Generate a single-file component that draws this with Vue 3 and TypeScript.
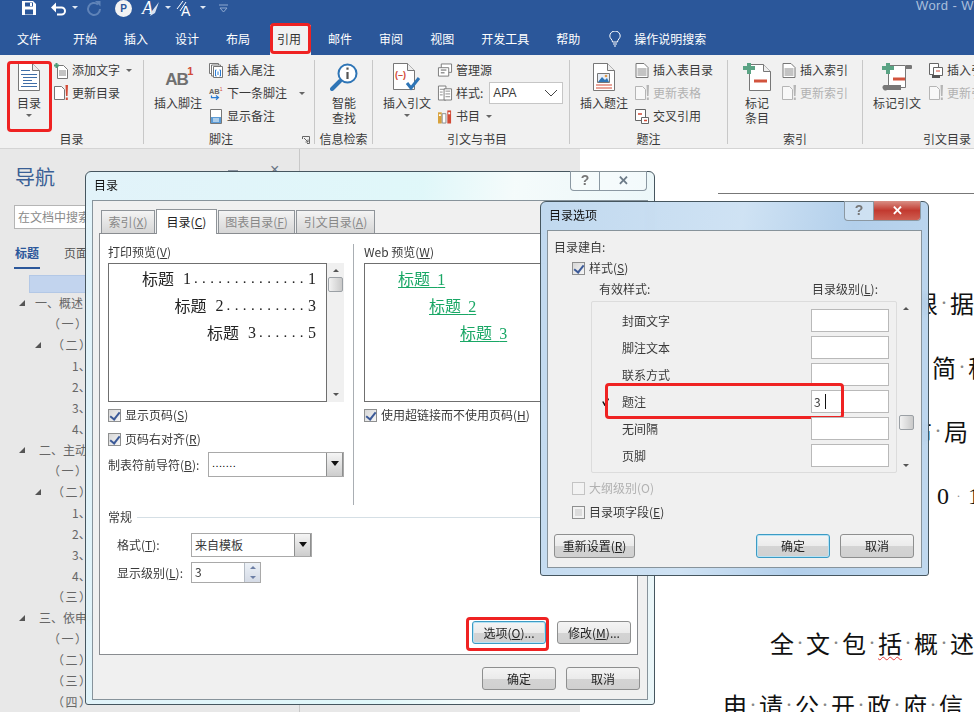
<script setup lang="ts">
interface TreeRow { t: string; x: number; a?: number }
const tabs = ['文件', '开始', '插入', '设计', '布局', '引用', '邮件', '审阅', '视图', '开发工具', '帮助']
const tree: TreeRow[] = [
  { t: '一、概述', x: 35, a: 19 }, { t: '（一）', x: 48 }, { t: '（二）', x: 52, a: 35 },
  { t: '1、', x: 72 }, { t: '2、', x: 72 }, { t: '3、', x: 72 }, { t: '4、', x: 72 },
  { t: '二、主动公开', x: 39, a: 19 }, { t: '（一）', x: 48 }, { t: '（二）', x: 52, a: 35 },
  { t: '1、', x: 72 }, { t: '2、', x: 72 }, { t: '3、', x: 72 }, { t: '4、', x: 72 },
  { t: '（三）', x: 52 }, { t: '三、依申请公开', x: 39, a: 19 }, { t: '（一）', x: 48 },
  { t: '（二）', x: 52 }, { t: '（三）', x: 52 }, { t: '（四）', x: 52 },
]
const styles = ['封面文字', '脚注文本', '联系方式', '题注', '无间隔', '页脚']
const docLines = [
  { c: 'l1', chars: ['根', '据'] }, { c: 'l2', chars: ['简', '称'] }, { c: 'l3', chars: ['布', '局'] },
  { c: 'l5', chars: ['全', '文', '包', '括', '概', '述'] }, { c: 'l6', chars: ['申', '请', '公', '开', '政', '府', '信'] },
]
</script>

<template>
  <div class="word">
    <header class="titlebar">
      <div class="qat">
        <svg class="q-save" width="14" height="14" viewBox="0 0 14 14"><path fill="#fff" d="M0 0h11l3 3v11H0z"/><path fill="#2b579a" d="M3 1.500h8v4H3zM3 8.500h8v5H3z"/><path fill="#fff" d="M8 2h2v3H8z"/></svg>
        <svg class="q-undo" width="17" height="14" viewBox="0 0 17 14"><path fill="none" stroke="#fff" stroke-width="2" d="M3 6.500h7.500a3.500 3.500 0 0 1 0 7H6"/><path fill="#fff" d="M0 6.500 5 1.500v10z"/></svg>
        <i class="car c-w q1"></i>
        <svg class="q-redo" width="14" height="15" viewBox="0 0 14 15"><path fill="none" stroke="#5f83b8" stroke-width="2" d="M11 3.500A6 6 0 1 0 13 8"/><path fill="#5f83b8" d="M8 0h5.500v5.500z"/></svg>
        <span class="q-p">P</span>
        <svg class="q-a" width="18" height="17" viewBox="0 0 18 17"><text x="0" y="14" font-family="Liberation Serif" font-size="18" font-style="italic" fill="#fff">A</text><path fill="#d9e3f1" d="M17 2 10 11l-2 5 5-3z"/></svg>
        <i class="car c-w q2"></i>
        <svg class="q-a2" width="18" height="17" viewBox="0 0 18 17"><text x="4" y="16" font-family="Liberation Sans" font-size="14" fill="#fff">A</text><path stroke="#fff" fill="none" d="M0 9 6 1M3 11 9 2"/></svg>
        <i class="car c-w q3"></i>
        <svg class="q-f" width="9" height="9" viewBox="0 0 9 9"><path fill="none" stroke="#8ea8cf" d="M0 1h9M1 4h7L4.500 8z"/></svg>
      </div>
      <span class="appname">Word - W</span>
    </header>

    <nav class="tabs">
      <span v-for="t in tabs" :key="t" class="tab" :class="{ on: t === '引用' }">{{ t }}<b v-if="t === '引用'" class="red red-tab"></b></span>
      <svg class="bulb" width="12" height="16" viewBox="0 0 12 16"><path fill="none" stroke="#fff" d="M3.500 11C3.500 8.500 .8 7.500.8 5a5.200 5 0 0 1 10.400 0c0 2.500-2.700 3.500-2.700 6zM4 13h4M5 15h2"/></svg>
      <span class="tab search">操作说明搜索</span>
    </nav>

    <section class="ribbon">
      <div class="grp g1">
        <div class="body">
          <div class="big b1">
            <svg width="22" height="28" viewBox="0 0 22 28"><path fill="#fff" stroke="#777" d="M.5.500h14l7 7v20H.5z"/><path fill="#eee" stroke="#777" d="M14.500.500v7h7"/><path stroke="#3f6ea8" d="M3 7.500h9M3 11.500h16M5 14.500h14M5 17.500h9M5 20.500h14M3 23.500h16"/></svg>
            <span>目录</span><i class="car bigcar"></i>
            <b class="red red-big"></b>
          </div>
          <div class="col">
            <div class="row"><svg class="ico" width="14" height="17" viewBox="0 0 14 17"><path fill="#fff" stroke="#777" d="M3.500 3.500h6l4 4v9h-10z"/><path stroke="#888" d="M5 9h7M5 11h7M5 13h7"/><path stroke="#4d9c78" stroke-width="2" d="M0 3.500h5M2.500 1v5"/></svg><span>添加文字</span><i class="car rc"></i></div>
            <div class="row"><svg class="ico" width="14" height="16" viewBox="0 0 14 16"><path fill="#fff" stroke="#777" d="M.5 1.500h7l3 3v10H.5z"/><path fill="#d24a36" d="M11.500 0H14l-.5 11h-1.500zM11.800 12.500h2v2.500h-2z"/></svg><span>更新目录</span></div>
          </div>
        </div>
        <label>目录</label>
      </div>

      <div class="grp g2">
        <div class="body">
          <div class="big b2">
            <div class="ab">AB<sup>1</sup></div>
            <span>插入脚注</span>
          </div>
          <div class="col">
            <div class="row"><svg class="ico" width="14" height="16" viewBox="0 0 14 16"><path fill="#fff" stroke="#777" d="M.5 1.500h9v10h-9z"/><path fill="#fff" stroke="#777" d="M2.500 3h9v11h-9z"/><path fill="#fff" stroke="#777" d="M4.500 4.500h9v11h-9z"/><path stroke="#2b7cd3" d="M6.500 8v6M11.500 8v6M6.500 8h1M6.500 14h1M10.500 8h1M10.500 14h1M9 9.500v3.500"/></svg><span>插入尾注</span></div>
            <div class="row"><svg class="ico" width="17" height="17" viewBox="0 0 17 17"><text x="0" y="9" font-family="Liberation Sans" font-size="9" font-weight="700" fill="#666">AB</text><text x="13" y="6" font-family="Liberation Sans" font-size="6" fill="#d24a36">1</text><path fill="none" stroke="#2b7cd3" stroke-width="1.500" d="M3 11v2.500h8M8.500 11l3 2.500-3 2.500"/></svg><span>下一条脚注</span><i class="car rc rc2"></i></div>
            <div class="row"><svg class="ico" width="14" height="15" viewBox="0 0 14 15"><path fill="#fff" stroke="#777" d="M1.500.5h11v14h-11z"/><path fill="#5b9bd5" d="M2 8h10v6H2z"/><path stroke="#fff" d="M4 10h6M4 12h6"/></svg><span>显示备注</span></div>
          </div>
        </div>
        <label>脚注</label>
        <svg class="launch" width="8" height="8" viewBox="0 0 8 8"><path fill="none" stroke="#666" d="M.5 3V.5H7.500V7.500H5M2 2l4 4M3.500 6H6V3.500"/></svg>
      </div>

      <div class="grp g3">
        <div class="body">
          <div class="big b3">
            <svg width="28" height="28" viewBox="0 0 28 28"><circle cx="17.500" cy="10.500" r="9" fill="#fff" stroke="#2e75b6" stroke-width="2"/><path stroke="#2e75b6" stroke-width="4" stroke-linecap="round" d="M10 18l-8 8"/><path stroke="#555" stroke-width="2.200" d="M17.500 9v7"/><path stroke="#555" stroke-width="2.200" d="M17.500 4.500v2.200"/></svg>
            <span class="two">智能<br />查找</span>
          </div>
        </div>
        <label>信息检索</label>
      </div>

      <div class="grp g4">
        <div class="body">
          <div class="big b4">
            <svg width="28" height="28" viewBox="0 0 28 28"><path fill="#fff" stroke="#777" d="M.5.500h14l7 7v19H.5z"/><path fill="#eee" stroke="#777" d="M14.500.500v7h7"/><text x="2" y="15" font-family="Liberation Sans" font-size="9" font-weight="700" fill="#d24a36">(–)</text><path fill="none" stroke="#2e75b6" stroke-width="3" d="M14 20l4 5 8-10"/></svg>
            <span>插入引文</span><i class="car bigcar"></i>
          </div>
          <div class="col">
            <div class="row"><svg class="ico" width="15" height="15" viewBox="0 0 15 15"><path fill="#fff" stroke="#777" d="M3.500.5h11v9h-11z"/><path fill="#fff" stroke="#777" d="M.5 4.500h11v9H.5z"/><path stroke="#555" d="M3 7h6M3 10h4"/></svg><span>管理源</span></div>
            <div class="row"><svg class="ico" width="15" height="16" viewBox="0 0 15 16"><path fill="#fff" stroke="#777" d="M.5.500h8v15h-8z"/><path fill="#fff" stroke="#777" d="M6.500 3.500h8v12h-8z"/><path stroke="#888" d="M2 4h5M2 7h3M2 10h3M8 6h5M8 9h5M8 12h5"/></svg><span>样式:</span><span class="apa">APA<svg width="14" height="8" viewBox="0 0 14 8"><path fill="none" stroke="#444" d="M1 1l6 6 6-6"/></svg></span></div>
            <div class="row"><svg class="ico" width="15" height="15" viewBox="0 0 15 15"><path fill="#d8a23c" d="M0 3h4v12H0z"/><path fill="#fff" stroke="#888" d="M4.500 4.500h4v10h-4z"/><path fill="#d24a36" d="M10 1h4v14h-4z"/><path fill="#fff" d="M1 5h2v2H1zM11 3h2v2h-2z"/></svg><span>书目</span><i class="car rc"></i></div>
          </div>
        </div>
        <label>引文与书目</label>
      </div>

      <div class="grp g5">
        <div class="body">
          <div class="big b5">
            <svg width="22" height="28" viewBox="0 0 22 28"><path fill="#fff" stroke="#777" d="M.5.500h14l7 7v20H.5z"/><path fill="#eee" stroke="#777" d="M14.500.500v7h7"/><path fill="#e8eef6" stroke="#777" d="M4.500 10.500h12v9h-12z"/><path fill="#2e75b6" d="M5 19l4-5 3 3 2-2 2 4z"/><circle cx="13" cy="13" r="1.300" fill="#e09b4a"/><path stroke="#d24a36" d="M3 22h16M3 25h16"/></svg>
            <span>插入题注</span>
          </div>
          <div class="col">
            <div class="row"><svg class="ico" width="13" height="15" viewBox="0 0 13 15"><path fill="#fff" stroke="#777" d="M.5.500h8l4 4v10H.5z"/><path stroke="#888" d="M2 6h9M2 8h9M2 10h9M2 12h9"/></svg><span>插入表目录</span></div>
            <div class="row gray"><svg class="ico" width="14" height="16" viewBox="0 0 14 16"><path fill="#f8f8f8" stroke="#b5b5b5" d="M.5 1.500h7l3 3v10H.5z"/><path fill="#b5b5b5" d="M11.500 0H14l-.5 11h-1.500zM11.800 12.500h2v2.500h-2z"/></svg><span>更新表格</span></div>
            <div class="row"><svg class="ico" width="14" height="15" viewBox="0 0 14 15"><path fill="#fff" stroke="#666" d="M.5.500h10v11H.5z"/><path fill="#fff" stroke="#666" d="M6.500 8.500h7v6h-7z"/><path stroke="#d24a36" stroke-width="1.500" d="M3 5h4M9 11.500h3"/></svg><span>交叉引用</span></div>
          </div>
        </div>
        <label>题注</label>
      </div>

      <div class="grp g6">
        <div class="body">
          <div class="big b6">
            <svg width="28" height="28" viewBox="0 0 28 28"><path fill="#fff" stroke="#777" d="M6.500 1.500h14l7 7v19h-21z"/><path fill="#eee" stroke="#777" d="M20.500 1.500v7h7"/><path stroke="#5aa384" stroke-width="4" d="M0 5h12M6 0v11"/><path stroke="#d2533d" stroke-width="3" d="M11 18h13"/></svg>
            <span class="two">标记<br />条目</span>
          </div>
          <div class="col">
            <div class="row"><svg class="ico" width="13" height="15" viewBox="0 0 13 15"><path fill="#fff" stroke="#777" d="M.5.500h8l4 4v10H.5z"/><path stroke="#888" d="M2 6h9M2 8h9M2 10h9M2 12h9"/></svg><span>插入索引</span></div>
            <div class="row gray"><svg class="ico" width="14" height="16" viewBox="0 0 14 16"><path fill="#f8f8f8" stroke="#b5b5b5" d="M.5 1.500h7l3 3v10H.5z"/><path fill="#b5b5b5" d="M11.500 0H14l-.5 11h-1.500zM11.800 12.500h2v2.500h-2z"/></svg><span>更新索引</span></div>
          </div>
        </div>
        <label>索引</label>
      </div>

      <div class="grp g7">
        <div class="body">
          <div class="big b7">
            <svg width="30" height="28" viewBox="0 0 30 28"><path fill="#fff" stroke="#777" d="M6.500 2.500h17v22h-17z"/><path fill="#777" d="M24 2h4a2 2 0 0 1 1 4h-5zM2 22h17v5H5a2.500 2.500 0 0 1-3-5z"/><path stroke="#5aa384" stroke-width="4" d="M0 5h12M6 0v11"/><path stroke="#d2533d" stroke-width="3" d="M11 16h12"/></svg>
            <span>标记引文</span>
          </div>
          <div class="col">
            <div class="row"><svg class="ico" width="14" height="15" viewBox="0 0 14 15"><path fill="#fff" stroke="#666" d="M.5.500h9v11h-9z"/><path fill="#fff" stroke="#666" d="M4.500 4.500h9v8h-9z"/><path stroke="#d24a36" d="M7 8h4"/><path fill="#555" d="M3 12h8v3H3z"/></svg><span>插入引</span></div>
            <div class="row gray"><svg class="ico" width="14" height="16" viewBox="0 0 14 16"><path fill="#f8f8f8" stroke="#b5b5b5" d="M.5 1.500h7l3 3v10H.5z"/><path fill="#b5b5b5" d="M11.500 0H14l-.5 11h-1.500zM11.800 12.500h2v2.500h-2z"/></svg><span>更新引</span></div>
          </div>
        </div>
        <label>引文目录</label>
      </div>
    </section>

    <main class="work">
      <aside class="nav">
        <div class="nav-head"><h1>导航</h1><span class="nv-min"></span><span class="nv-x">×</span></div>
        <div class="nav-search">在文档中搜索</div>
        <div class="nav-tabs"><span class="active">标题</span><span>页面</span></div>
        <div class="sel"></div>
        <div v-for="(r, i) in tree" :key="i" class="tree-row" :class="{ paren: r.t.startsWith('（') }" :style="{ paddingLeft: r.x + 'px' }">
          <i v-if="r.a" class="tri" :style="{ left: r.a + 'px' }"></i>{{ r.t }}
        </div>
      </aside>
      <div class="gutter"></div>
      <article class="page">
        <div class="rule"></div>
        <div v-for="l in docLines" :key="l.c" class="dl" :class="l.c">
          <template v-for="(c, i) in l.chars" :key="i">
            <span v-if="i" class="dot">·</span>
            <span class="ch" :class="{ sq: c === '括' }">{{ c }}</span>
          </template>
        </div>
        <div class="dl nums"><span class="n">0</span><span class="dot wide">·</span><span class="n">1</span></div>
      </article>
    </main>

    <div class="dialog d1">
      <div class="d-head">
        <span>目录</span>
        <div class="ctrl"><span class="c-q">?</span><span class="c-x">✕</span></div>
      </div>
      <div class="frame f1">
        <div class="dtabs">
          <span class="dt t1">索引(<u>X</u>)</span>
          <span class="dt t2 cur">目录(<u>C</u>)</span>
          <span class="dt t3">图表目录(<u>F</u>)</span>
          <span class="dt t4">引文目录(<u>A</u>)</span>
        </div>
        <div class="panel">
          <div class="cols">
            <div class="left">
              <div class="lab">打印预览(<u>V</u>)</div>
              <div class="pv-wrap">
                <div class="pv">
                  <div class="pl">标题<em>1</em><s>..............</s><em>1</em></div>
                  <div class="pl">标题<em>2</em><s>..........</s><em>3</em></div>
                  <div class="pl">标题<em>3</em><s>......</s><em>5</em></div>
                </div>
                <div class="sb sb1"><i class="up"></i><b class="th th1"></b><i class="dn"></i></div>
              </div>
              <div class="chk ck1"><i class="cb on"></i><span>显示页码(<u>S</u>)</span></div>
              <div class="chk ck2"><i class="cb on"></i><span>页码右对齐(<u>R</u>)</span></div>
              <div class="lead">
                <span>制表符前导符(<u>B</u>):</span>
                <div class="dd dd1"><span class="mini">.......</span><i class="ddb"></i></div>
              </div>
            </div>
            <div class="right">
              <div class="lab">Web 预览(<u>W</u>)</div>
              <div class="pv web">
                <div class="w1"><a>标题&nbsp;&nbsp;<em>1</em></a></div>
                <div class="w2"><a>标题&nbsp;&nbsp;<em>2</em></a></div>
                <div class="w3"><a>标题&nbsp;&nbsp;<em>3</em></a></div>
              </div>
              <div class="chk ck1"><i class="cb on"></i><span>使用超链接而不使用页码(<u>H</u>)</span></div>
            </div>
          </div>
          <div class="legend"><span>常规</span><hr /></div>
          <div class="frow fr1"><span class="fl">格式(<u>T</u>):</span><div class="dd dd2"><span>来自模板</span><i class="ddb"></i></div></div>
          <div class="frow fr2"><span class="fl">显示级别(<u>L</u>):</span><div class="spin">3<span class="spb"><i class="up"></i><i class="dn"></i></span></div></div>
          <div class="panel-btns">
            <button class="btn focus opt">选项(<u>O</u>)...<b class="red red-opt"></b></button>
            <button class="btn">修改(<u>M</u>)...</button>
          </div>
        </div>
        <div class="d-btns"><button class="btn">确定</button><button class="btn">取消</button></div>
      </div>
    </div>

    <div class="dialog d2">
      <div class="d-head">
        <span>目录选项</span>
        <div class="ctrl"><span class="c-q">?</span><span class="c-x hot">✕</span></div>
      </div>
      <div class="frame f2">
        <div class="from">目录建自:</div>
        <div class="chk s-ck"><i class="cb on"></i><span>样式(<u>S</u>)</span></div>
        <div class="heads"><span>有效样式:</span><span>目录级别(<u>L</u>):</span></div>
        <div class="listwrap">
          <div class="list">
            <div v-for="s in styles" :key="s" class="lrow">
              <span class="tick"><svg v-if="s === '题注'" width="7" height="8" viewBox="0 0 7 8"><path fill="none" stroke="#111" stroke-width="1.500" d="M.8 3.500 2.800 7 6.500.5"/></svg></span>
              <span>{{ s }}</span>
              <span class="lv">
                <template v-if="s === '题注'">3<i class="caret"></i></template>
              </span>
              <b v-if="s === '题注'" class="red red-row"></b>
            </div>
          </div>
          <div class="sb sb2"><i class="up"></i><b class="th th2"></b><i class="dn"></i></div>
        </div>
        <div class="chk o-ck gray"><i class="cb off"></i><span>大纲级别(O)</span></div>
        <div class="chk o-ck2"><i class="cb half"></i><span>目录项字段(<u>E</u>)</span></div>
        <div class="f2-btns">
          <button class="btn reset">重新设置(<u>R</u>)</button>
          <button class="btn focus">确定</button>
          <button class="btn">取消</button>
        </div>
      </div>
    </div>
  </div>
</template>

<style>
html, body { margin: 0; background: #fff; }
</style>

<style scoped>
* { box-sizing: border-box; }
.word {
  position: relative; width: 974px; height: 712px; overflow: hidden; background: #fff;
  font: 12px/16px "Noto Sans CJK SC", "Liberation Sans", sans-serif; color: #3a3a3a;
}
u { text-underline-offset: 1px; }

.titlebar { height: 25px; background: #2b579a; display: flex; white-space: nowrap; overflow: hidden; }
.qat { width: 916px; flex: none; display: flex; align-items: flex-start; }
.qat svg { overflow: visible; flex: none; }
.q-save { margin: 1px 0 0 22px; }
.q-undo { margin: 1px 0 0 15px; }
.q-redo { margin: 1px 0 0 9px; }
.q-p {
  margin: 0 0 0 14px; width: 17px; height: 17px; border-radius: 50%; background: #f3f3f3; color: #2b579a;
  font: 700 10px/17px "Liberation Sans", sans-serif; text-align: center; flex: none;
}
.q-a { margin: 0 0 0 10px; }
.q-a2 { margin: 0 0 0 6px; }
.q-f { margin: 4px 0 0 13px; }
.car { display: block; width: 0; height: 0; border: 3px solid transparent; border-top: 3px solid #666; border-bottom-width: 0; }
.c-w { border-top-color: #dfe7f2; margin-top: 6px; }
.q1 { margin-left: 4px; }
.q2 { margin-left: 5px; }
.q3 { margin-left: 5px; }
.appname { color: #a9bedb; font: 13px/11px "Liberation Sans", sans-serif; letter-spacing: .4px; flex: none; }

.tabs { height: 30px; background: #2b579a; display: flex; gap: 27px; padding-left: 17px; color: #fff; line-height: 28px; }
.tab { position: relative; flex: none; }
.tab:first-child { margin-right: 5px; }
.tab.on { background: #f1f1f1; color: #333; padding: 0 10px 0 7px; margin: 0 -10px 0 -7px; }
.bulb { margin: 6px 0 0 2px; flex: none; }
.search { margin-left: -14px; }

.red { position: absolute; border: 3px solid #ef2222; border-radius: 4px; display: block; pointer-events: none; }
.red-tab { inset: -2px 0 1px 0; }
.red-big { left: -1px; right: -2px; top: 1px; bottom: -1px; }
.red-opt { inset: -5px -4px -8px -7px; }
.red-row { left: 13px; right: 52px; top: -7px; bottom: -6px; }

.ribbon { height: 94px; background: #f1f1f1; border-bottom: 1px solid #d4d4d4; display: flex; padding-top: 5px; overflow: hidden; }
.grp { position: relative; flex: none; height: 84px; border-right: 1px solid #c8c8c8; display: flex; flex-direction: column; }
.body { display: flex; height: 71px; flex: none; }
.grp > label { height: 16px; line-height: 16px; text-align: center; white-space: nowrap; }
.big { position: relative; display: flex; flex-direction: column; align-items: center; padding-top: 3px; line-height: 15px; flex: none; }
.big > svg { height: 28px; margin-bottom: 4px; flex: none; }
.big span { white-space: nowrap; }
.two { text-align: center; }
.bigcar { margin-top: 4px; }
.col { display: flex; flex-direction: column; gap: 3px; flex: none; }
.row { height: 20px; display: flex; align-items: center; gap: 4px; white-space: nowrap; }
.ico { flex: none; width: 14px; overflow: visible; }
.rc { margin-left: 2px; }
.rc2 { margin-left: 8px; }
.gray { color: #b1b1b1; }
.g1 { width: 144px; } .g2 { width: 171px; } .g3 { width: 58px; } .g4 { width: 197px; }
.g5 { width: 158px; } .g6 { width: 135px; } .g7 { width: 168px; border-right: 0; }
.b1 { width: 42px; margin: 0 4px 0 8px; }
.b2 { width: 48px; margin: 0 7px 0 10px; }
.b3 { width: 48px; margin-left: 5px; }
.b4 { width: 48px; margin: 0 7px 0 10px; }
.b5 { width: 48px; margin: 0 7px 0 10px; }
.b6 { width: 28px; margin: 0 11px 0 15px; }
.b7 { width: 48px; margin: 0 8px 0 10px; }
.g2 > label { padding-right: 16px; }
.g4 > label { padding-left: 12px; }
.ab {
  height: 28px; margin-bottom: 4px; margin-right: 3px; font: 700 17px/33px "Liberation Sans", sans-serif; letter-spacing: -1px; color: #707070; position: relative;
}
.ab sup { position: absolute; left: 22px; top: 2px; font: 700 11px/13px "Liberation Sans", sans-serif; letter-spacing: 0; color: #d24a36; }
.launch { position: absolute; right: 4px; bottom: 0; }
.apa {
  margin-left: 2px; width: 74px; height: 22px; background: #fff; border: 1px solid #c6c6c6;
  display: flex; justify-content: space-between; align-items: center; padding: 0 4px 0 3px;
  font-family: "Liberation Sans", sans-serif; font-size: 12px;
}

.work { display: flex; height: 563px; }
.nav { position: relative; width: 300px; flex: none; background: #e8e8e8; border-right: 1px solid #c8c8c8; overflow: hidden; }
.nav-head { height: 28px; margin-top: 14px; padding-left: 15px; display: flex; align-items: center; position: relative; }
.nav-head h1 { margin: 0; font: 400 20px/28px "Noto Sans CJK SC", sans-serif; color: #3a5f95; }
.nv-min { position: absolute; left: 228px; top: 7px; width: 10px; height: 2px; background: #8a93a0; }
.nv-x { position: absolute; left: 270px; top: -3px; font: 16px/20px "Liberation Sans", sans-serif; color: #6a7585; }
.nav-search { margin: 14px 0 0 14px; width: 270px; height: 24px; background: #fff; border: 1px solid #b5b5b5; padding-left: 3px; color: #8a8a8a; font-size: 12px; line-height: 22px; }
.nav-tabs { display: flex; gap: 25px; padding-left: 15px; margin-top: 16px; height: 25px; }
.nav-tabs span { line-height: 16px; color: #555; }
.nav-tabs .active { color: #2b579a; font-weight: 700; position: relative; }
.nav-tabs .active::after { content: ""; position: absolute; left: -1px; right: -1px; top: 22px; height: 2px; background: #2b579a; }
.sel { margin: 5px 0 0 29px; width: 240px; height: 18px; background: #c2d4ee; border: 1px solid #b3c8e6; }
.tree-row { position: relative; height: 21px; line-height: 20px; white-space: nowrap; color: #666; }
.paren { letter-spacing: 1.500px; }
.tri { position: absolute; top: 7px; width: 0; height: 0; border-style: solid; border-width: 0 0 6px 6px; border-color: transparent transparent #555 transparent; }

.gutter { width: 280px; flex: none; background: #e8e8e8; }
.page { flex: 1; background: #fff; padding-top: 44px; position: relative; font-size: 24px; color: #111; white-space: nowrap; }
.rule { margin-left: 138px; height: 1px; background: #777; }
.dl { display: flex; height: 36px; line-height: 36px; align-items: center; }
.dot { width: 12px; text-align: center; color: #888; font-size: 12px; flex: none; }
.ch { width: 24px; flex: none; }
.sq { text-decoration: underline wavy #e34040 1px; text-underline-offset: 3px; }
.l1 { margin: 91px 0 0 334px; }
.l2 { margin: 28px 0 0 352px; }
.l3 { margin: 28px 0 0 328px; }
.nums { position: absolute; left: 357px; top: 329px; font-family: "Liberation Serif", serif; }
.n { width: 12px; flex: none; }
.wide { width: 19px; }
.l5 { margin: 176px 0 0 190px; }
.l6 { margin: 26px 0 0 143px; }

.dialog { position: absolute; border: 1px solid #46565f; border-radius: 6px 6px 3px 3px; backdrop-filter: blur(3px); }
.d1 { left: 85px; top: 171px; width: 570px; height: 534px; background: linear-gradient(95deg, rgba(225,243,250,.94), rgba(223,248,250,.94) 55%, rgba(245,252,252,.94) 70%, rgba(232,245,248,.94)); }
.d2 { left: 540px; top: 201px; width: 389px; height: 375px; background: linear-gradient(100deg, rgba(190,215,238,.96), rgba(205,225,243,.96) 45%, rgba(175,205,234,.96) 70%, rgba(190,215,238,.96)); }
.d-head { height: 28px; padding-left: 8px; line-height: 26px; color: #111; position: relative; }
.ctrl {
  position: absolute; top: -1px; right: 7px; height: 20px; display: flex; border: 1px solid #8b98a2; border-top: 0;
  border-radius: 0 0 4px 4px; background: rgba(255,255,255,.35); overflow: hidden;
}
.c-q { width: 29px; text-align: center; border-right: 1px solid #8b98a2; font: 700 14px/19px "Liberation Sans", sans-serif; color: #777; }
.c-x { width: 46px; text-align: center; font: 700 13px/19px "Liberation Sans", sans-serif; color: #6d7b88; }
.hot { color: #fff; background: linear-gradient(#d98f85, #c23a30 50%, #cf5f52); }
.frame { margin: 0 6px; background: #f0f0f0; border: 1px solid #87939b; }
.f1 { height: 500px; padding: 8px 7px 0 6px; }
.dtabs { display: flex; height: 24px; position: relative; z-index: 1; padding-left: 2px; align-items: flex-end; }
.dt { height: 23px; line-height: 22px; text-align: center; color: #888; background: linear-gradient(#f4f4f4, #d6d6d6); border: 1px solid #8f9499; border-bottom: 0; margin-right: 1px; }
.dt.cur { height: 25px; background: #fff; color: #222; line-height: 23px; margin-bottom: -1px; }
.t1 { width: 54px; } .t2 { width: 61px; } .t3 { width: 77px; } .t4 { width: 79px; }
.panel { width: 539px; height: 422px; background: #fff; border: 1px solid #898c90; display: flex; flex-direction: column; padding-top: 10px; }
.cols { display: flex; height: 261px; flex: none; }
.left { width: 253px; padding-left: 8px; flex: none; }
.right { flex: 1; border-left: 1px solid #a9aeb3; padding-left: 10px; min-width: 0; }
.lab { height: 16px; line-height: 16px; white-space: nowrap; }
.pv { margin-top: 3px; height: 139px; border: 1px solid #6f6f6f; background: #fff; }
.pv-wrap { display: flex; }
.pv-wrap .pv { width: 219px; font-size: 16px; color: #222; padding-top: 1px; padding-right: 10px; }
.pl { height: 27px; line-height: 27px; white-space: nowrap; display: flex; justify-content: flex-end; }
.pl em { font: 16px/27px "Liberation Serif", serif; width: 8px; flex: none; }
.pl em:nth-of-type(1) { margin-left: 9px; }
.pl s { text-decoration: none; font: 15px/27px "Liberation Serif", serif; letter-spacing: 4.400px; margin-left: 3px; flex: none; }
.sb { position: relative; width: 17px; background: #f0f0f0; display: flex; flex-direction: column; align-items: center; }
.sb1 { margin-top: 3px; height: 139px; }
.up, .dn { display: block; width: 0; height: 0; border: 3.500px solid transparent; flex: none; }
.up { border-bottom: 3.500px solid #555; border-top-width: 0; }
.dn { border-top: 3.500px solid #555; border-bottom-width: 0; }
.sb .up { margin-top: 6px; }
.sb .dn { margin-top: auto; margin-bottom: 6px; }
.th { display: block; width: 15px; border: 1px solid #9ba0a5; border-radius: 2px; background: linear-gradient(90deg, #f2f2f2, #c9c9c9); flex: none; }
.th1 { height: 15px; margin-top: 5px; }
.th2 { height: 15px; margin-top: 105px; }
.chk { display: flex; align-items: center; height: 16px; gap: 4px; white-space: nowrap; }
.ck1 { margin-top: 5px; }
.ck2 { margin-top: 8px; }
.cb { position: relative; display: block; width: 13px; height: 13px; border: 1px solid #8e8f8f; background: linear-gradient(135deg, #d7d7d7, #f6f6f6); flex: none; }
.cb.on::after { content: ""; position: absolute; left: 3px; top: 0; width: 4px; height: 8px; border: solid #3c5a98; border-width: 0 2px 2px 0; transform: rotate(38deg); }
.cb.off { background: #f3f3f3; border-color: #c4c4c4; }
.cb.half { border-color: #8e8f8f; box-shadow: inset 0 0 0 2px #f2f2f2; background: #dcdcdc; }
.lead { display: flex; align-items: center; justify-content: space-between; margin-top: 5px; width: 236px; white-space: nowrap; }
.dd { position: relative; height: 25px; background: #fff; border: 1px solid #a9a9a9; padding-left: 3px; line-height: 22px; display: flex; justify-content: space-between; }
.dd1 { width: 136px; }
.dd2 { width: 121px; height: 24px; font-size: 12px; }
.mini { font: 11px/20px "Liberation Sans", sans-serif; letter-spacing: .4px; color: #000; }
.ddb { position: relative; display: block; width: 17px; height: 100%; background: linear-gradient(#f5f5f5, #cdcdcd); border-left: 1px solid #8e8f8f; border-right: 1px solid #8e8f8f; }
.ddb::after { content: ""; position: absolute; left: 4px; top: 8px; border: 4px solid transparent; border-top: 5px solid #111; border-bottom: 0; }
.web { width: 200px; padding-top: 1px; font-size: 16px; color: #19a765; white-space: nowrap; }
.web em { font: 16px/27px "Liberation Serif", serif; }
.web a { text-decoration: underline; text-underline-offset: 2px; }
.web > div { height: 27px; line-height: 27px; }
.w1 { padding-left: 33px; }
.w2 { padding-left: 64px; }
.w3 { padding-left: 95px; }
.legend { display: flex; align-items: center; gap: 5px; height: 16px; margin-top: 4px; padding-left: 8px; flex: none; }
.legend hr { flex: 1; margin: 0; border: 0; border-top: 1px solid #d5dfe5; }
.frow { display: flex; align-items: center; padding-left: 17px; flex: none; }
.fl { width: 74px; white-space: nowrap; }
.fr1 { margin-top: 8px; }
.fr2 { margin-top: 5px; }
.spin { position: relative; width: 70px; height: 21px; border: 1px solid #a9a9a9; padding-left: 3px; line-height: 18px; }
.spb { position: absolute; right: 0; top: 0; width: 16px; height: 100%; display: flex; flex-direction: column; align-items: center; justify-content: space-around; background: linear-gradient(#ecf1f7, #d5dbe6); border-left: 1px solid #b5bcc5; }
.spb .up, .spb .dn { border-width: 3px; }
.spb .up { border-bottom-color: #6d7fa5; border-top-width: 0; }
.spb .dn { border-top-color: #6d7fa5; border-bottom-width: 0; }
.panel-btns { margin-top: auto; margin-bottom: 10px; display: flex; justify-content: flex-end; gap: 11px; padding-right: 6px; flex: none; }
.btn {
  position: relative; width: 74px; height: 23px; border: 1px solid #8e8f8f; border-radius: 3px; padding: 0; font: inherit; color: #222;
  background: linear-gradient(#f4f4f4 0, #ebebeb 50%, #d4d4d4 52%, #d0d0d0 100%); white-space: nowrap;
}
.btn.focus { border-color: #3c9bc4; box-shadow: inset 0 0 0 1px #b7e2f4; }
.d-btns { margin-top: 12px; display: flex; justify-content: flex-end; gap: 10px; }
.f2 { height: 338px; padding: 8px 7px 0 7px; }
.from { height: 16px; margin-left: -1px; }
.s-ck { margin: 5px 0 0 17px; }
.heads { display: flex; height: 16px; margin: 5px 0 0 44px; }
.heads span:first-child { width: 213px; }
.listwrap { display: flex; margin: 4px 0 0 36px; height: 172px; }
.list { width: 306px; flex: none; height: 172px; border: 1px solid #dcdcdc; padding-top: 7px; border-radius: 2px; }
.lrow { position: relative; display: flex; align-items: center; height: 23px; margin-bottom: 4px; padding-left: 10px; }
.tick { width: 20px; flex: none; display: flex; }
.lv { margin-left: auto; margin-right: 7px; width: 78px; height: 23px; background: #fff; border: 1px solid #b9b9b9; padding-left: 2px; line-height: 21px; display: flex; align-items: center; }
.caret { display: block; width: 1px; height: 15px; background: #111; margin-left: 4px; }
.sb2 { height: 172px; margin-left: 1px; }
.o-ck { margin: 7px 0 0 17px; }
.o-ck2 { margin: 8px 0 0 17px; }
.f2-btns { display: flex; gap: 10px; margin-top: 14px; }
.f2-btns .btn { height: 24px; }
.reset { width: 81px; margin: 0 auto 0 -1px; }
</style>
